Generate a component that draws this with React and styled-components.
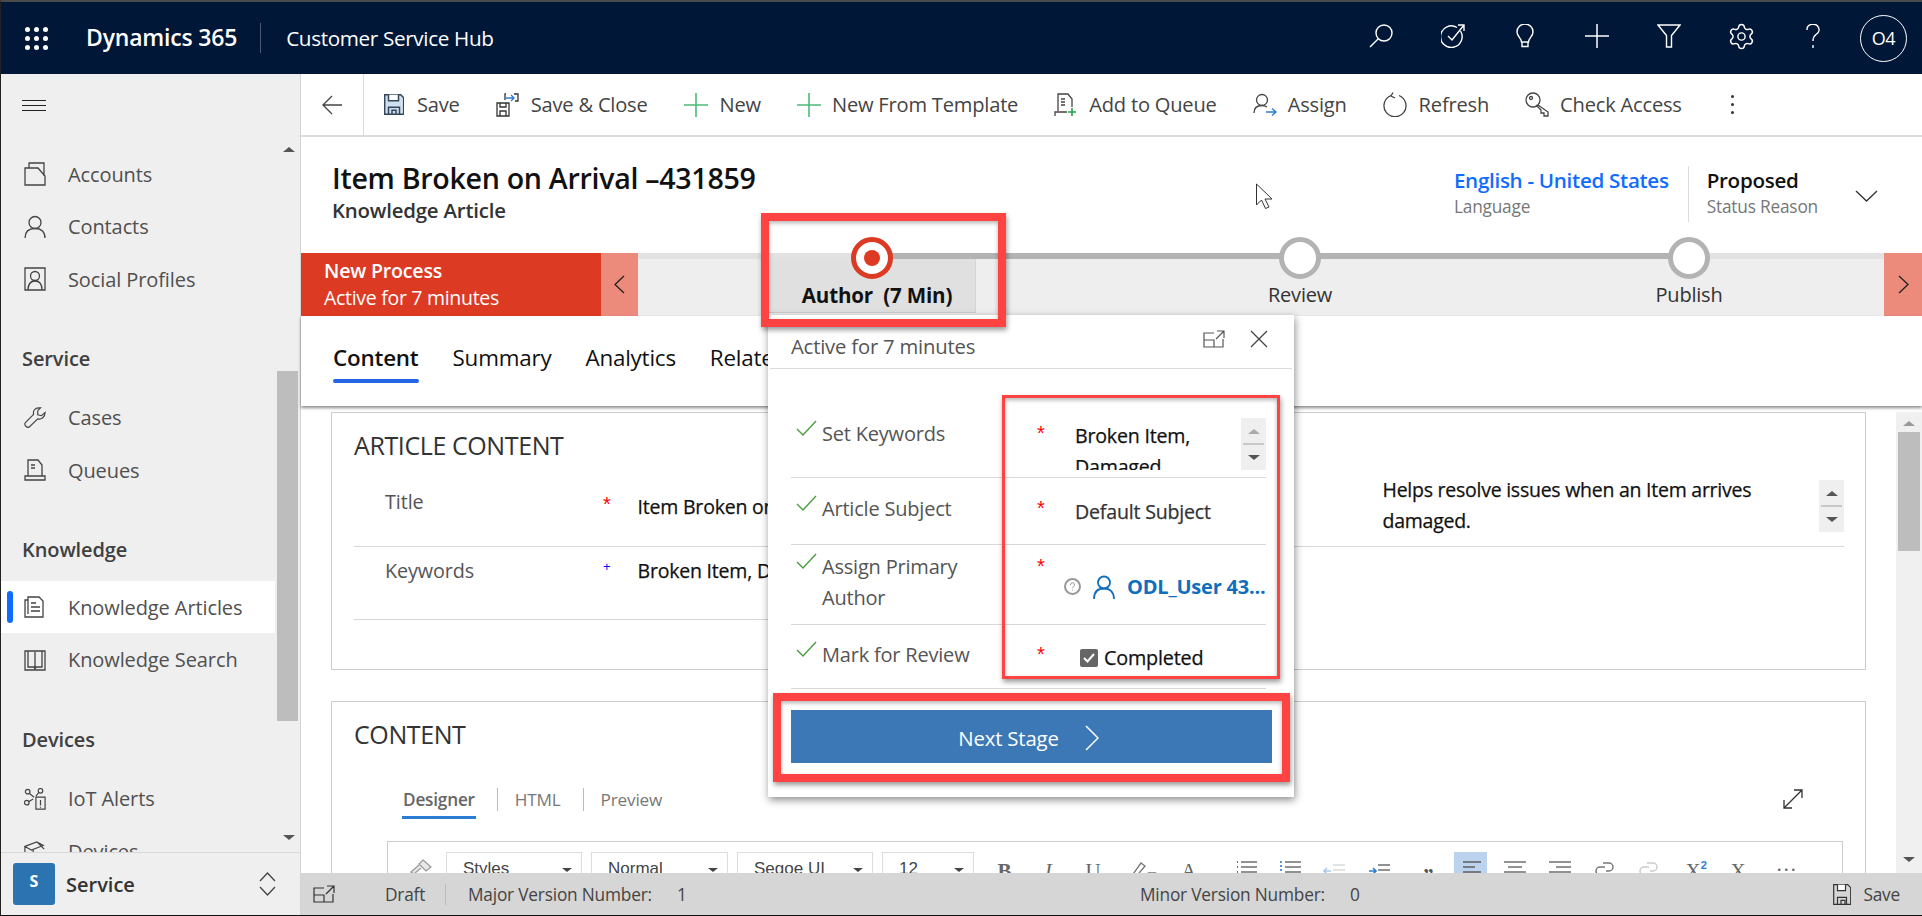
import React from "react";
import styled, { createGlobalStyle } from "styled-components";
import { Settings } from "lucide-react";

const UI = `"Open Sans", "Noto Sans", sans-serif`;
const RED = "#dc3a23";
const NOTE = "#ff4343";

const Global = createGlobalStyle`
  html, body { margin: 0; padding: 0; background: #fff; overflow: hidden; }
  * { box-sizing: border-box; }
  body { font-family: ${UI}; }
`;

const Shell = styled.div`
  position: relative;
  width: 1922px;
  height: 916px;
  overflow: hidden;
  border-top: 2px solid #4a4a4a;
  border-left: 1px solid #222;
  border-bottom: 1px solid #111;
  display: flex;
  flex-direction: column;
  background: #fff;
`;

/* top bar */
const NavBar = styled.header`
  flex: 0 0 72px;
  background: #001737;
  display: flex;
  align-items: center;
  color: #fff;
  padding-left: 24px;
`;
const Waffle = styled.div`
  display: grid;
  grid-template-columns: repeat(3, 5px);
  gap: 4px;
  margin-right: 38px;
  span { width: 5px; height: 5px; border-radius: 50%; background: #fff; }
`;
const Brand = styled.div`
  font-size: 23px;
  font-weight: 600;
  letter-spacing: -0.2px;
  padding-right: 23px;
  height: 30px;
  line-height: 28px;
  white-space: nowrap;
  border-right: 1px solid #4b5a70;
  margin-right: 25px;
`;
const AppName = styled.div`
  font-size: 20.7px;
  letter-spacing: -0.35px;
`;
const NavIcons = styled.div`
  margin-left: auto;
  display: flex;
  align-items: center;
  padding-right: 15px;
`;
const NavIcon = styled.div`
  width: 72px;
  height: 30px;
  display: flex;
  align-items: center;
  justify-content: center;
  margin-top: -4px;
`;
const Avatar = styled.div`
  width: 47px;
  height: 47px;
  margin-left: 11px;
  border-radius: 50%;
  border: 1px solid #fff;
  display: flex;
  align-items: center;
  justify-content: center;
  font-size: 18px;
  letter-spacing: -0.5px;
`;

const Body = styled.div`
  flex: 1;
  min-height: 0;
  display: flex;
`;

/* left navigation */
const Sidebar = styled.aside`
  flex: 0 0 300px;
  background: #efefef;
  border-right: 1px solid #d4d4d4;
  display: flex;
  flex-direction: column;
  color: #505050;
`;
const Hamburger = styled.div`
  flex: 0 0 62px;
  padding: 26px 0 0 21px;
  span { display: block; width: 24px; height: 1px; background: #222; margin-bottom: 4px; }
`;
const SideMiddle = styled.div`
  flex: 1;
  min-height: 0;
  display: flex;
  overflow: hidden;
`;
const SideList = styled.nav`
  flex: 0 0 274px;
  padding-top: 12px;
`;
const SideHeading = styled.div`
  height: 40px;
  line-height: 40px;
  font-size: 20px;
  font-weight: 600;
  letter-spacing: -0.1px;
  color: #404040;
  padding-left: 21px;
  margin: ${(p) => p.$top}px 0 ${(p) => p.$bottom}px;
`;
const SideRow = styled.div`
  position: relative;
  height: 52.5px;
  display: flex;
  align-items: center;
  padding-left: 23px;
  font-size: 20px;
  letter-spacing: -0.1px;
  background: ${(p) => (p.$active ? "#fff" : "transparent")};
  svg { margin-right: 22px; }
  ${(p) =>
    p.$active &&
    `&::before {
      content: "";
      position: absolute;
      left: 6px;
      top: 10px;
      width: 6px;
      height: 32px;
      border-radius: 3px;
      background: #0f6cff;
    }`}
`;
const SideScrollbar = styled.div`
  flex: 0 0 25px;
  padding: 11px 0 0 2px;
`;
const Thumb = styled.div`
  width: 21px;
  height: 350px;
  margin: 219px 0 114px;
  background: #bdbdbd;
`;
const Arrow = styled.div`
  width: 0;
  height: 0;
  flex: none;
  margin: ${(p) => p.$m || "0 auto"};
  border-left: ${(p) => p.$s || 6}px solid transparent;
  border-right: ${(p) => p.$s || 6}px solid transparent;
  ${(p) => (p.$down ? "border-top" : "border-bottom")}: ${(p) => (p.$s ? p.$s : 6) - 1}px solid ${(p) => p.$c || "#555"};
`;
const SideFooter = styled.div`
  flex: 0 0 63px;
  border-top: 1px solid #d8d8d8;
  display: flex;
  align-items: flex-start;
  padding: 10px 0 0 12px;
  background: #efefef;
  position: relative;
`;
const AppBadge = styled.div`
  width: 42px;
  height: 42px;
  background: #2b74b1;
  border-radius: 3px;
  color: #fff;
  font-weight: 700;
  font-size: 16px;
  padding-bottom: 6px;
  display: flex;
  align-items: center;
  justify-content: center;
`;
const FooterName = styled.div`
  margin-left: 11px;
  font-size: 20px;
  font-weight: 600;
  line-height: 44px;
  color: #333;
`;
const FooterSwitch = styled.div`
  margin: 9px 0 0 auto;
  padding-right: 24px;
`;

/* main */
const Main = styled.main`
  flex: 1;
  min-width: 0;
  display: flex;
  flex-direction: column;
`;
const Toolbar = styled.div`
  flex: 0 0 63px;
  border-bottom: 2px solid #dcdcdc;
  display: flex;
  align-items: center;
  color: #444;
`;
const BackCell = styled.div`
  flex: 0 0 63px;
  height: 100%;
  border-right: 1px solid #dcdcdc;
  display: flex;
  align-items: center;
  justify-content: center;
`;
const ToolItems = styled.div`
  display: flex;
  align-items: center;
  gap: 36px;
  padding-left: 20px;
`;
const ToolItem = styled.div`
  display: flex;
  align-items: center;
  gap: ${(p) => p.$gap}px;
  font-size: 20.1px;
  letter-spacing: -0.2px;
  white-space: nowrap;
`;
const Kebab = styled.div`
  margin-left: 13px;
  span { display: block; width: 3px; height: 3px; border-radius: 50%; background: #333; margin: 5px 0; }
`;

const RecordHeader = styled.div`
  flex: 0 0 116px;
  display: flex;
  align-items: flex-start;
  padding: 21px 44px 0 31px;
`;
const RecordTitle = styled.h1`
  margin: 0;
  font-size: 28.6px;
  line-height: 40px;
  font-weight: 600;
  letter-spacing: -0.3px;
  color: #111;
`;
const RecordType = styled.div`
  margin-top: -1px;
  font-size: 20.4px;
  line-height: 26px;
  font-weight: 600;
  letter-spacing: -0.2px;
  color: #333;
`;
const HeaderRight = styled.div`
  margin-left: auto;
  padding-top: 8px;
  display: flex;
  align-items: flex-start;
`;
const HeaderField = styled.div`
  ${(p) => p.$split && "border-left: 1px solid #dcdcdc; margin-left: 19px; padding-left: 18px; height: 56px;"}
`;
const HeaderValue = styled.div`
  font-size: 20.6px;
  font-weight: 600;
  line-height: 29px;
  letter-spacing: -0.3px;
  color: ${(p) => p.$c};
`;
const HeaderLabel = styled.div`
  font-size: 17.3px;
  line-height: 24px;
  letter-spacing: -0.2px;
  color: #777;
`;
const HeaderChevron = styled.div`
  margin: 24px 0 0 37px;
`;

/* business process bar */
const ProcessBar = styled.div`
  flex: 0 0 63px;
  display: flex;
  color: #222;
`;
const ProcessName = styled.div`
  flex: 0 0 300px;
  background: ${RED};
  color: #fff;
  padding: 4px 0 0 23px;
`;
const ProcessTitle = styled.div`
  font-size: 19.6px;
  font-weight: 600;
  line-height: 28px;
  letter-spacing: -0.2px;
`;
const ProcessSub = styled.div`
  font-size: 19.5px;
  line-height: 26px;
  letter-spacing: -0.3px;
`;
const PageButton = styled.div`
  flex: 0 0 ${(p) => p.$w}px;
  background: #ec8a7c;
  display: flex;
  align-items: center;
  justify-content: center;
`;
const Track = styled.div`
  position: relative;
  flex: 1;
  background: #eee;
  border-top: 6px solid #e2e2e2;
  display: flex;
  padding-left: 131px;
`;
const Rail = styled.div`
  position: absolute;
  left: 234px;
  width: 817px;
  top: -6px;
  height: 6px;
  background: #b3b3b3;
`;
const Stage = styled.div`
  position: relative;
  flex: 0 0 ${(p) => p.$w}px;
  height: 54px;
  display: flex;
  flex-direction: column;
  align-items: center;
  ${(p) => p.$active && "background: #e0e0e0; border-bottom: 1px solid #ccc; border-right: 1px solid #d6d6d6;"}
`;
const StageDot = styled.div`
  width: 42px;
  height: 42px;
  flex: none;
  margin-top: -22px;
  border-radius: 50%;
  background: #fff;
  border: 5px solid ${(p) => (p.$active ? RED : "#b3b3b3")};
  display: flex;
  align-items: center;
  justify-content: center;
  i { width: 16px; height: 16px; border-radius: 50%; background: ${RED}; }
`;
const StageLabel = styled.div`
  margin: 4px 0 0 ${(p) => (p.$active ? 10 : 0)}px;
  font-size: ${(p) => (p.$active ? 20.6 : 20)}px;
  line-height: 24px;
  letter-spacing: -0.2px;
  white-space: pre;
  font-weight: ${(p) => (p.$active ? 700 : 400)};
  color: ${(p) => (p.$active ? "#111" : "#333")};
`;

const TabBar = styled.div`
  position: relative;
  z-index: 1;
  flex: 0 0 90px;
  display: flex;
  gap: 34px;
  padding: 27px 0 0 32px;
  background: #fff;
  box-shadow: 0 2px 3px rgba(0, 0, 0, 0.45);
`;
const Tab = styled.div`
  font-size: 22.4px;
  line-height: 30px;
  letter-spacing: -0.2px;
  font-weight: ${(p) => (p.$active ? 600 : 400)};
  color: #111;
  &::after {
    content: "";
    display: block;
    height: 4px;
    margin-top: 6px;
    border-radius: 2px;
    background: ${(p) => (p.$active ? "#2266e3" : "transparent")};
  }
`;

const FormArea = styled.div`
  flex: 1;
  min-height: 0;
  display: flex;
  overflow: hidden;
`;
const FormScroll = styled.div`
  flex: 1;
  min-width: 0;
  padding: 6px 30px 0 30px;
`;
const Card = styled.section`
  border: 1px solid #ccc;
  padding: 0 21px 0 22px;
  margin-bottom: 31px;
  ${(p) => p.$h && `height: ${p.$h}px;`}
`;
const CardHeading = styled.h2`
  margin: 0;
  padding-top: 17px;
  height: 47px;
  font-size: 25px;
  line-height: 30px;
  font-weight: 400;
  letter-spacing: -0.4px;
  color: #333;
`;
const FieldRow = styled.div`
  display: flex;
  height: ${(p) => p.$h}px;
  width: ${(p) => p.$w || "1490px"};
  border-bottom: 1px solid #d8d8d8;
  position: relative;
`;
const FieldLabel = styled.div`
  flex: 0 0 249px;
  padding: ${(p) => p.$top}px 0 0 31px;
  font-size: 19.8px;
  line-height: 30px;
  letter-spacing: -0.1px;
  color: #555;
`;
const Required = styled.div`
  flex: 0 0 34.5px;
  padding-top: ${(p) => p.$top}px;
  font-family: "Liberation Sans", sans-serif;
  font-size: ${(p) => p.$size || 20}px;
  line-height: 20px;
  color: ${(p) => p.$c || "#f00"};
`;
const FieldValue = styled.div`
  padding-top: ${(p) => p.$top}px;
  font-size: 19.5px;
  font-weight: 500;
  -webkit-text-stroke: 0.25px #111;
  line-height: 31px;
  letter-spacing: -0.2px;
  white-space: nowrap;
  color: #111;
  flex: 0 0 ${(p) => p.$w || "auto"};
`;
const Description = styled.div`
  width: 420px;
  padding-top: 14px;
  font-size: 19.5px;
  font-weight: 500;
  -webkit-text-stroke: 0.25px #111;
  line-height: 31px;
  letter-spacing: -0.25px;
  color: #111;
`;
const Spinner = styled.div`
  flex: 0 0 25px;
  height: 52px;
  background: #efefef;
  margin-top: ${(p) => p.$top || 0}px;
  margin-left: auto;
  display: flex;
  flex-direction: column;
  align-items: center;
  padding-top: 11px;
  hr { width: 21px; height: 2px; margin: 9px 0 10px; border: 0; background: #c8c8c8; }
`;
const EditorTabs = styled.div`
  display: flex;
  align-items: flex-start;
  margin: 39px 0 0 48px;
  height: 53px;
`;
const EditorTab = styled.div`
  padding: 0 1px;
  height: 31px;
  line-height: 24px;
  font-size: 17.2px;
  letter-spacing: -0.2px;
  font-weight: ${(p) => (p.$active ? 600 : 400)};
  color: ${(p) => (p.$active ? "#666" : "#777")};
  border-bottom: 3px solid ${(p) => (p.$active ? "#2b7cd3" : "transparent")};
  &:not(:last-child) { margin-right: 21px; }
`;
const TabSep = styled.div`
  width: 1px;
  height: 23px;
  background: #bbb;
  margin-right: 16px;
`;
const ExpandCell = styled.div`
  margin: 1px 41px 0 auto;
`;
const EditorBox = styled.div`
  margin-left: 33px;
  width: 1456px;
  height: 60px;
  border: 1px solid #ccc;
  padding-top: 10px;
  display: flex;
  align-items: flex-start;
`;
const BrushCell = styled.div`
  flex: 0 0 58px;
  padding: 6px 0 0 21px;
`;
const SelectBox = styled.div`
  flex: 0 0 ${(p) => p.$w}px;
  height: 40px;
  margin-right: 9px;
  border: 1px solid #ddd;
  padding-left: 16px;
  display: flex;
  justify-content: space-between;
  font-family: "Liberation Sans", sans-serif;
  font-size: 17px;
  line-height: 31px;
  color: #444;
`;
const EditorButton = styled.div`
  flex: 0 0 ${(p) => p.$w || 44.7}px;
  height: 40px;
  display: flex;
  justify-content: center;
  align-items: flex-start;
  padding-top: ${(p) => p.$pad ?? 7}px;
  background: ${(p) => (p.$on ? "#bcd3ef" : "transparent")};
  font-family: "Liberation Serif", serif;
  font-size: 21px;
  line-height: 24px;
  color: ${(p) => p.$c || "#666"};
  font-weight: ${(p) => (p.$b ? 700 : 400)};
  font-style: ${(p) => (p.$i ? "italic" : "normal")};
`;
const Script = styled.span`
  font-family: "Liberation Sans", sans-serif;
  font-size: 11px;
  line-height: 12px;
  font-weight: 700;
  color: ${(p) => p.$c || "#2b7cd3"};
`;
const MainScrollbar = styled.div`
  flex: 0 0 26px;
  margin-top: 6px;
  background: #f0f0f0;
  padding: 9px 2px 0;
`;
const MainThumb = styled.div`
  height: 119px;
  margin: 6px 0 306px;
  background: #bdbdbd;
`;

const StatusBar = styled.footer`
  flex: 0 0 42px;
  background: #d6d6d6;
  display: grid;
  grid-template-columns: 84px 61px 672px 1fr auto;
  align-items: center;
  font-size: 17.3px;
  letter-spacing: -0.2px;
  color: #444;
`;
const StatusCell = styled.div`
  padding-left: ${(p) => p.$pl || 0}px;
  display: flex;
  align-items: center;
  ${(p) => p.$sep && "border-right: 1px solid #bbb; height: 21px;"}
`;
const StatusValue = styled.span`
  margin-left: 25px;
`;
const StatusSave = styled.div`
  display: flex;
  align-items: center;
  gap: 12px;
  padding-right: 22px;
`;

/* stage flyout */
const Flyout = styled.div`
  position: absolute;
  left: 767px;
  top: 313px;
  width: 526px;
  height: 482px;
  background: #fff;
  box-shadow: 1px 3px 8px rgba(0, 0, 0, 0.45);
  z-index: 3;
`;
const FlyoutHead = styled.div`
  height: 54px;
  border-bottom: 1px solid #dcdcdc;
  margin: 0 2px;
  padding: 16px 24px 0 21px;
  display: flex;
  justify-content: space-between;
  font-size: 20.3px;
  line-height: 30px;
  letter-spacing: -0.2px;
  color: #555;
`;
const FlyoutTools = styled.div`
  display: flex;
  gap: 25px;
  margin-top: -1px;
`;
const StepRows = styled.div`
  padding: 0 28px 0 23px;
`;
const StepRow = styled.div`
  height: ${(p) => p.$h}px;
  border-bottom: 1px solid #d8d8d8;
  padding-top: ${(p) => p.$top}px;
  display: flex;
  align-items: flex-start;
`;
const StepLabel = styled.div`
  flex: 0 0 246px;
  display: flex;
  align-items: flex-start;
  gap: 5px;
  padding-left: 5px;
  font-size: 20px;
  line-height: 31px;
  letter-spacing: -0.2px;
  color: #555;
  svg { margin-top: 2px; }
`;
const StepMark = styled.div`
  flex: 0 0 38px;
  padding-top: 5px;
  font-family: "Liberation Sans", sans-serif;
  font-size: 20px;
  line-height: 20px;
  color: #f00;
`;
const StepValue = styled.div`
  flex: 1;
  min-width: 0;
  margin-top: ${(p) => p.$shift || 0}px;
  font-size: ${(p) => p.$size || 19.6}px;
  font-weight: 500;
  -webkit-text-stroke: 0.25px ${(p) => p.$c || "#111"};
  line-height: 31px;
  letter-spacing: -0.2px;
  color: ${(p) => p.$c || "#111"};
  ${(p) => p.$clip && "height: 52px; overflow: hidden; display: flex;"}
`;
const ClipText = styled.div`
  padding-top: 2px;
`;
const OwnerLine = styled.div`
  display: flex;
  align-items: center;
  margin-left: -11px;
  white-space: nowrap;
  color: #106ebe;
  -webkit-text-stroke: 0;
  font-weight: 700;
  font-size: 20px;
  gap: 12px;
`;
const CheckLine = styled.div`
  display: flex;
  align-items: center;
  margin-left: 5px;
  gap: 6px;
  letter-spacing: -0.2px;
`;
const CheckBox = styled.div`
  width: 18px;
  height: 18px;
  border-radius: 2px;
  background: #666;
  display: flex;
  align-items: center;
  justify-content: center;
`;
const NextButton = styled.div`
  margin: 21px 0 0 23px;
  width: 481px;
  height: 53px;
  background: #3c78b5;
  color: #fff;
  font-size: 20.4px;
  letter-spacing: -0.2px;
  display: flex;
  align-items: center;
  justify-content: center;
  gap: 26px;
  padding: 2px 6px 0 0;
`;

/* red call-out rectangles drawn on the screenshot */
const Callout = styled.div`
  position: absolute;
  left: ${(p) => p.$x}px;
  top: ${(p) => p.$y}px;
  width: ${(p) => p.$w}px;
  height: ${(p) => p.$h}px;
  border: ${(p) => p.$b}px solid ${NOTE};
  box-shadow: 1px 3px 5px rgba(0, 0, 0, 0.4), inset 0 2px 4px rgba(0, 0, 0, 0.3);
  z-index: 4;
  pointer-events: none;
`;
const Pointer = styled.svg`
  position: absolute;
  left: 1254px;
  top: 180px;
  z-index: 4;
`;

// w/h is the drawing space, dw the width it is shown at when that differs
const Ico = ({ w, h, dw, c = "#444", sw = 1.3, children }) => (
  <svg
    width={dw || w}
    height={dw ? (dw * h) / w : h}
    viewBox={`0 0 ${w} ${h}`}
    fill="none"
    stroke={c}
    strokeWidth={sw}
    style={{ display: "block", flex: "none" }}
  >
    {children}
  </svg>
);

const Plus = () => (
  <Ico w={24} h={24} c="#4dbb78" sw={1.6}>
    <path d="M12 0v24M0 12h24" />
  </Ico>
);
const Chevron = ({ dir = "right", c = "#222", w = 11, h = 19, sw = 1.3 }) => (
  <Ico w={w} h={h} c={c} sw={sw}>
    {dir === "right" ? <path d={`M1 1l${w - 2} ${h / 2 - 1}L1 ${h - 1}`} /> : <path d={`M${w - 1} 1L1 ${h / 2}l${w - 2} ${h / 2 - 1}`} />}
  </Ico>
);
const Floppy = ({ fill = "#cfe0f0", c = "#37475a", w = 20, h = 21, sw = 1.5 }) => (
  <Ico w={w} h={h} c={c} sw={sw}>
    <path d={`M.7.7h${w - 4}l3 3v${h - 4.4}H.7z`} fill={fill} />
    <path d={`M4.5.7v6h${w - 10}v-6`} fill="#fff" />
    <path d={`M4.5 ${h - 0.7}v-7h${w - 9}v7`} />
    <path d={`M8 ${h - 0.7}v-4h4v4`} />
  </Ico>
);
const Popout = ({ c = "#333" }) => (
  <Ico w={22} h={18} c={c} sw={1.2}>
    <path d="M11 3H1v14h19V9M1 10h10v7M14 1h7v7M21 1l-8 8" />
  </Ico>
);
const Tick = () => (
  <Ico w={21} h={17} c="#4a9e3f" sw={1.4}>
    <path d="M1 9l6 6L20 1" />
  </Ico>
);
const Lines = ({ rows, c = "#777", children }) => (
  <Ico w={24} h={14} c={c} sw={1.6}>
    {rows.map(([a, b], i) => (
      <path key={i} d={`M${a} ${2 + i * 5}H${b}`} />
    ))}
    {children}
  </Ico>
);

const accounts = (
  <Ico w={22} h={24} c="#444">
    <path d="M1 6h13l7 8v9H1zM5 6V1h15v13" />
  </Ico>
);
const contacts = (
  <Ico w={22} h={24} c="#444">
    <circle cx="11" cy="7.5" r="6" />
    <path d="M1 23c0-7 4-9.500 10-9.500s10 2.500 10 9.500" />
  </Ico>
);
const social = (
  <Ico w={22} h={24} c="#444">
    <path d="M1 1h20v22H1z" />
    <circle cx="11" cy="9" r="4.500" />
    <path d="M4 23c0-6 3-9 7-9s7 3 7 9" />
  </Ico>
);
const wrench = (
  <Ico w={24} h={24} dw={22} c="#444">
    <path d="M16 1c-4 0-6.500 3-5.500 7L1.500 17c-1.500 2 .5 6 4 5l9.500-9c4 1 8-2 8-7l-4 3.500-4-1V4l3-3z" />
  </Ico>
);
const queue = (
  <Ico w={22} h={22} c="#444">
    <path d="M4 17V1h10l4 5v11M1 21v-4h20v4zM7 6h4M7 9h4" />
  </Ico>
);
const article = (
  <Ico w={22} h={22} c="#444">
    <path d="M4 18V1h11l4 4v16H1V4h3M7 7h5M7 11h9M7 15h9" />
  </Ico>
);
const book = (
  <Ico w={22} h={22} c="#444">
    <path d="M1 21V2h20v19zM4 2v16h6l1 2 1-2h6V2M11 3v16" />
  </Ico>
);
const iot = (
  <Ico w={24} h={24} dw={22} c="#444">
    <circle cx="4" cy="4" r="2.500" />
    <circle cx="3" cy="16" r="2.500" />
    <circle cx="18" cy="3" r="2.500" />
    <path d="M6 6l5 4M5 15l5-3M16 5l-3 4M13 10h10v13H13zM18 13v6M18 20.500v1" />
  </Ico>
);
const device = (
  <Ico w={24} h={24} dw={22} c="#444">
    <path d="M1 7l13-5 7 4-13 5zM1 7v14h9V11M14 2l8 8" />
  </Ico>
);

const toolItems = [
  ["Save", <Floppy key="s" />, 13],
  [
    "Save & Close",
    <Ico key="c" w={23} h={24} c="#333">
      <path d="M1 10h12v13H1zM4 10v4h6v-4M4 23v-5h6v5" fill="#fff" />
      <path d="M10 1h-1v6M18 1h4v7h-3" />
      <path d="M10 5h8M15 2l3 3-3 3" stroke="#2b7cd3" />
    </Ico>,
    12,
  ],
  ["New", <Plus key="n" />, 12],
  ["New From Template", <Plus key="t" />, 11],
  [
    "Add to Queue",
    <Ico key="q" w={23} h={24} c="#444">
      <path d="M4 18V1h10l4 5v8M1 23v-4h12M7 6h4M7 9h4M7 12h4" />
      <path d="M18 15v8M14 19h8" stroke="#22a24a" strokeWidth="1.600" />
    </Ico>,
    12,
  ],
  [
    "Assign",
    <Ico key="a" w={24} h={24} c="#444">
      <circle cx="9" cy="7" r="5.500" />
      <path d="M1 20c0-5 3-7.500 8-7.500 2 0 3.500.5 5 1.500" />
      <path d="M13 19h10M19 15.500l4 3.500-4 3.500" stroke="#2b7cd3" />
    </Ico>,
    11,
  ],
  [
    "Refresh",
    <Ico key="r" w={24} h={25} c="#444">
      <path d="M8 3.500A11 11 0 1 0 16 3.500" />
      <path d="M10 .5L8 4l4 2" />
    </Ico>,
    12,
  ],
  [
    "Check Access",
    <Ico key="k" w={24} h={25} c="#444">
      <circle cx="8" cy="8" r="7" />
      <circle cx="6" cy="6" r="1.500" />
      <path d="M13 13l10 7v4h-4v-3h-3v-3l-5-5" />
    </Ico>,
    11,
  ],
];

const stages = [
  { name: "Author  (7 Min)", w: 207, active: true },
  { name: "Review", w: 648 },
  { name: "Publish", w: 130 },
];

const steps = [
  { label: ["Set Keywords"], h: 109, top: 49 },
  { label: ["Article Subject"], h: 67, top: 15 },
  { label: ["Assign Primary", "Author"], h: 80, top: 6 },
  { label: ["Mark for Review"], h: 64, top: 14 },
];

const App = () => (
  <Shell>
    <Global />
    <NavBar>
      <Waffle>
        {Array.from({ length: 9 }, (_, i) => (
          <span key={i} />
        ))}
      </Waffle>
      <Brand>Dynamics 365</Brand>
      <AppName>Customer Service Hub</AppName>
      <NavIcons>
        <NavIcon>
          <Ico w={24} h={24} c="#fff" sw={1.4}>
            <circle cx="15" cy="9" r="8" />
            <path d="M9.300 14.700L1 23" />
          </Ico>
        </NavIcon>
        <NavIcon>
          <Ico w={24} h={24} c="#fff" sw={1.4}>
            <path d="M19.500 7A10.800 10.800 0 1 1 16 3.500" />
            <path d="M7 12l4 4L23 1M17 1h6v6" />
          </Ico>
        </NavIcon>
        <NavIcon>
          <Ico w={18} h={24} c="#fff" sw={1.4}>
            <path d="M5.500 18c0-4-4.500-5.500-4.500-10a8 8 0 0 1 16 0c0 4.500-4.500 6-4.500 10zM6 18v4.500h6V18" />
          </Ico>
        </NavIcon>
        <NavIcon>
          <Ico w={24} h={24} c="#fff" sw={1.5}>
            <path d="M12 0v24M0 12h24" />
          </Ico>
        </NavIcon>
        <NavIcon>
          <Ico w={24} h={24} c="#fff" sw={1.4}>
            <path d="M1 1h22l-8.500 10.500V23h-5V11.500z" />
          </Ico>
        </NavIcon>
        <NavIcon>
          <Settings size={29} color="#fff" strokeWidth={1.2} />
        </NavIcon>
        <NavIcon>
          <Ico w={14} h={25} c="#fff" sw={1.4}>
            <path d="M1 6a6 5.500 0 1 1 9 4.500C8 12 7 13 7 17M7 21v3" />
          </Ico>
        </NavIcon>
        <Avatar>O4</Avatar>
      </NavIcons>
    </NavBar>
    <Body>
      <Sidebar>
        <Hamburger>
          <span />
          <span />
          <span />
        </Hamburger>
        <SideMiddle>
          <SideList>
            <SideRow>{accounts}Accounts</SideRow>
            <SideRow>{contacts}Contacts</SideRow>
            <SideRow>{social}Social Profiles</SideRow>
            <SideHeading $top={33} $bottom={12.75}>Service</SideHeading>
            <SideRow>{wrench}Cases</SideRow>
            <SideRow>{queue}Queues</SideRow>
            <SideHeading $top={33.5} $bottom={11}>Knowledge</SideHeading>
            <SideRow $active>{article}Knowledge Articles</SideRow>
            <SideRow>{book}Knowledge Search</SideRow>
            <SideHeading $top={34} $bottom={12.75}>Devices</SideHeading>
            <SideRow>{iot}IoT Alerts</SideRow>
            <SideRow>{device}Devices</SideRow>
          </SideList>
          <SideScrollbar>
            <Arrow />
            <Thumb />
            <Arrow $down />
          </SideScrollbar>
        </SideMiddle>
        <SideFooter>
          <AppBadge>S</AppBadge>
          <FooterName>Service</FooterName>
          <FooterSwitch>
            <Ico w={17} h={24} c="#444">
              <path d="M1 9l7.500-8L16 9M1 15l7.500 8L16 15" />
            </Ico>
          </FooterSwitch>
        </SideFooter>
      </Sidebar>
      <Main>
        <Toolbar>
          <BackCell>
            <Ico w={20} h={20} c="#444">
              <path d="M10 1l-9 9 9 9M1 10h19" />
            </Ico>
          </BackCell>
          <ToolItems>
            {toolItems.map(([label, icon, gap]) => (
              <ToolItem key={label} $gap={gap}>
                {icon}
                {label}
              </ToolItem>
            ))}
            <Kebab>
              <span />
              <span />
              <span />
            </Kebab>
          </ToolItems>
        </Toolbar>
        <RecordHeader>
          <div>
            <RecordTitle>Item Broken on Arrival –431859</RecordTitle>
            <RecordType>Knowledge Article</RecordType>
          </div>
          <HeaderRight>
            <HeaderField>
              <HeaderValue $c="#0f6cff">English - United States</HeaderValue>
              <HeaderLabel>Language</HeaderLabel>
            </HeaderField>
            <HeaderField $split>
              <HeaderValue $c="#111">Proposed</HeaderValue>
              <HeaderLabel>Status Reason</HeaderLabel>
            </HeaderField>
            <HeaderChevron>
              <Ico w={23} h={12} c="#333">
                <path d="M1 1l10.500 10L22 1" />
              </Ico>
            </HeaderChevron>
          </HeaderRight>
        </RecordHeader>
        <ProcessBar>
          <ProcessName>
            <ProcessTitle>New Process</ProcessTitle>
            <ProcessSub>Active for 7 minutes</ProcessSub>
          </ProcessName>
          <PageButton $w={37}>
            <Chevron dir="left" />
          </PageButton>
          <Track>
            <Rail />
            {stages.map((s) => (
              <Stage key={s.name} $w={s.w} $active={s.active}>
                <StageDot $active={s.active}>{s.active && <i />}</StageDot>
                <StageLabel $active={s.active}>{s.name}</StageLabel>
              </Stage>
            ))}
          </Track>
          <PageButton $w={38}>
            <Chevron />
          </PageButton>
        </ProcessBar>
        <TabBar>
          <Tab $active>Content</Tab>
          <Tab>Summary</Tab>
          <Tab>Analytics</Tab>
          <Tab>Related</Tab>
        </TabBar>
        <FormArea>
          <FormScroll>
            <Card $h={258}>
              <CardHeading>ARTICLE CONTENT</CardHeading>
              <FieldRow $h={87}>
                <FieldLabel $top={27}>Title</FieldLabel>
                <Required $top={34}>*</Required>
                <FieldValue $top={31} $w="745px">Item Broken on Arrival –431859</FieldValue>
                <Description>Helps resolve issues when an Item arrives damaged.</Description>
                <Spinner $top={20}>
                  <Arrow $s={6} />
                  <hr />
                  <Arrow $s={6} $down />
                </Spinner>
              </FieldRow>
              <FieldRow $h={73} $w="760px">
                <FieldLabel $top={9}>Keywords</FieldLabel>
                <Required $top={10} $size={13} $c="#00f">+</Required>
                <FieldValue $top={8}>Broken Item, Damaged</FieldValue>
              </FieldRow>
            </Card>
            <Card>
              <CardHeading>CONTENT</CardHeading>
              <EditorTabs>
                <EditorTab $active>Designer</EditorTab>
                <TabSep />
                <EditorTab>HTML</EditorTab>
                <TabSep />
                <EditorTab>Preview</EditorTab>
                <ExpandCell>
                  <Ico w={20} h={20} c="#333">
                    <path d="M1 19L19 1M11 1h8v8M1 11v8h8" />
                  </Ico>
                </ExpandCell>
              </EditorTabs>
              <EditorBox>
                <BrushCell>
                  <Ico w={24} h={24} c="#999" sw={1.2}>
                    <path d="M14 2l8 7-5 4-7-7zM10 7L2 14l3 2 7-6M2 14l2 8 5-6" fill="#e8e8e8" />
                  </Ico>
                </BrushCell>
                {[["Styles", 136], ["Normal", 137], ["Segoe UI", 136], ["12", 92]].map(([t, w]) => (
                  <SelectBox key={t} $w={w}>
                    {t}
                    <Arrow $s={5} $m="15px 9px 0 0" $c="#444" $down />
                  </SelectBox>
                ))}
                <EditorButton $b $w={43}>B</EditorButton>
                <EditorButton $i>I</EditorButton>
                <EditorButton>U</EditorButton>
                <EditorButton $w={54} $pad={9}>
                  <Ico w={30} h={18} c="#777">
                    <path d="M4 16L14 2l4 3-10 12z" />
                    <path d="M22 12h6l-3 3z" fill="#444" />
                  </Ico>
                </EditorButton>
                <EditorButton $w={54}>
                  A
                  <Arrow $s={5} $m="14px 0 0 5px" $c="#444" $down />
                </EditorButton>
                <EditorButton $pad={8}>
                  <Lines rows={[[7, 23], [7, 23], [7, 23]]}>
                    <path d="M3 2h1M3 7h1M3 12h1" stroke="#2b7cd3" strokeWidth="2" />
                  </Lines>
                </EditorButton>
                <EditorButton $pad={8}>
                  <Lines rows={[[7, 23], [7, 23], [7, 23]]}>
                    <path d="M3 1v12" stroke="#2b7cd3" strokeDasharray="2 2" />
                  </Lines>
                </EditorButton>
                <EditorButton $pad={11}>
                  <Lines rows={[[10, 22], [10, 22], [10, 22]]} c="#ddd">
                    <path d="M8 8H1M4 5L1 8l3 3" stroke="#a9c9ee" />
                  </Lines>
                </EditorButton>
                <EditorButton $pad={11}>
                  <Lines rows={[[10, 22], [10, 22], [10, 22]]}>
                    <path d="M1 8h7M5 5l3 3-3 3" stroke="#2b7cd3" />
                  </Lines>
                </EditorButton>
                <EditorButton $b $w={52} $pad={12} $c="#555">”</EditorButton>
                <EditorButton $on $pad={8} $w={33}><Lines rows={[[4, 22], [4, 16], [4, 22]]} c="#666" /></EditorButton>
                <EditorButton $w={56} $pad={8}><Lines rows={[[1, 23], [5, 19], [1, 23]]} /></EditorButton>
                <EditorButton $w={34} $pad={8}><Lines rows={[[1, 23], [8, 23], [1, 23]]} /></EditorButton>
                <EditorButton $w={58} $pad={8}>
                  <Ico w={24} h={18} c="#777" sw={1.500}>
                    <path d="M9 3h6a4 4 0 0 1 0 8h-3M11 7H6a4 4 0 0 0 0 8h4" />
                  </Ico>
                </EditorButton>
                <EditorButton $w={30} $pad={8}>
                  <Ico w={24} h={18} c="#ccc" sw={1.500}>
                    <path d="M9 3h6a4 4 0 0 1 0 8h-3M11 7H6a4 4 0 0 0 0 8h4" />
                  </Ico>
                </EditorButton>
                <EditorButton $w={62}>X<Script>2</Script></EditorButton>
                <EditorButton $w={22}>X</EditorButton>
                <EditorButton $w={74} $pad={0}>…</EditorButton>
              </EditorBox>
            </Card>
          </FormScroll>
          <MainScrollbar>
            <Arrow $s={6} $c="#999" />
            <MainThumb />
            <Arrow $s={6} $down />
          </MainScrollbar>
        </FormArea>
        <StatusBar>
          <StatusCell $pl={12}>
            <Popout />
          </StatusCell>
          <StatusCell $sep>Draft</StatusCell>
          <StatusCell $pl={22}>
            Major Version Number:<StatusValue>1</StatusValue>
          </StatusCell>
          <StatusCell $pl={22}>
            Minor Version Number:<StatusValue>0</StatusValue>
          </StatusCell>
          <StatusSave>
            <Floppy fill="none" c="#333" w={18} h={21} sw={1.2} />
            Save
          </StatusSave>
        </StatusBar>
      </Main>
    </Body>

    <Flyout>
      <FlyoutHead>
        Active for 7 minutes
        <FlyoutTools>
          <Popout c="#555" />
          <Ico w={18} h={18} c="#444">
            <path d="M1 1l16 16M17 1L1 17" />
          </Ico>
        </FlyoutTools>
      </FlyoutHead>
      <StepRows>
        {steps.map((st, i) => (
          <StepRow key={st.label[0]} $h={st.h} $top={st.top}>
            <StepLabel>
              <Tick />
              <div>
                {st.label.map((l) => (
                  <div key={l}>{l}</div>
                ))}
              </div>
            </StepLabel>
            <StepMark>*</StepMark>
            {i === 0 && (
              <StepValue $clip>
                <ClipText>
                  Broken Item,
                  <br />
                  Damaged,
                </ClipText>
                <Spinner>
                  <Arrow $s={6} $c="#aaa" />
                  <hr />
                  <Arrow $s={6} $down />
                </Spinner>
              </StepValue>
            )}
            {i === 1 && <StepValue $shift={3} $c="#333">Default Subject</StepValue>}
            {i === 2 && (
              <StepValue $shift={20}>
                <OwnerLine>
                  <Ico w={17} h={17} c="#999" sw={2}>
                    <circle cx="8.500" cy="8.500" r="7.500" />
                    <path d="M6.500 7a2 2 0 1 1 3 1.500L8.500 10M8.500 11.500v1" strokeWidth="1" />
                  </Ico>
                  <Ico w={22} h={24} c="#106ebe" sw={1.8}>
                    <circle cx="11" cy="7.500" r="6" />
                    <path d="M1 24c0-7 4-10.500 10-10.500S21 17 21 24" />
                  </Ico>
                  ODL_User 43...
                </OwnerLine>
              </StepValue>
            )}
            {i === 3 && (
              <StepValue $shift={3} $size={19.8}>
                <CheckLine>
                  <CheckBox>
                    <Ico w={12} h={10} c="#fff" sw={2}>
                      <path d="M1 5l3.500 3.500L11 1" />
                    </Ico>
                  </CheckBox>
                  Completed
                </CheckLine>
              </StepValue>
            )}
          </StepRow>
        ))}
      </StepRows>
      <NextButton>
        Next Stage
        <Chevron c="#fff" w={14} h={26} sw={1.5} />
      </NextButton>
    </Flyout>

    <Callout $x={760} $y={211} $w={245} $h={114} $b={8} />
    <Callout $x={1001} $y={393} $w={278} $h={284} $b={3} />
    <Callout $x={772} $y={691} $w={517} $h={89} $b={8} />
    <Pointer width="20" height="28" viewBox="0 0 20 28">
      <path d="M1.500 2v21l5-5 4 8.500 3.500-1.500-4-8h7z" fill="#fff" stroke="#333" strokeWidth="1" />
    </Pointer>
  </Shell>
);

export default App;
